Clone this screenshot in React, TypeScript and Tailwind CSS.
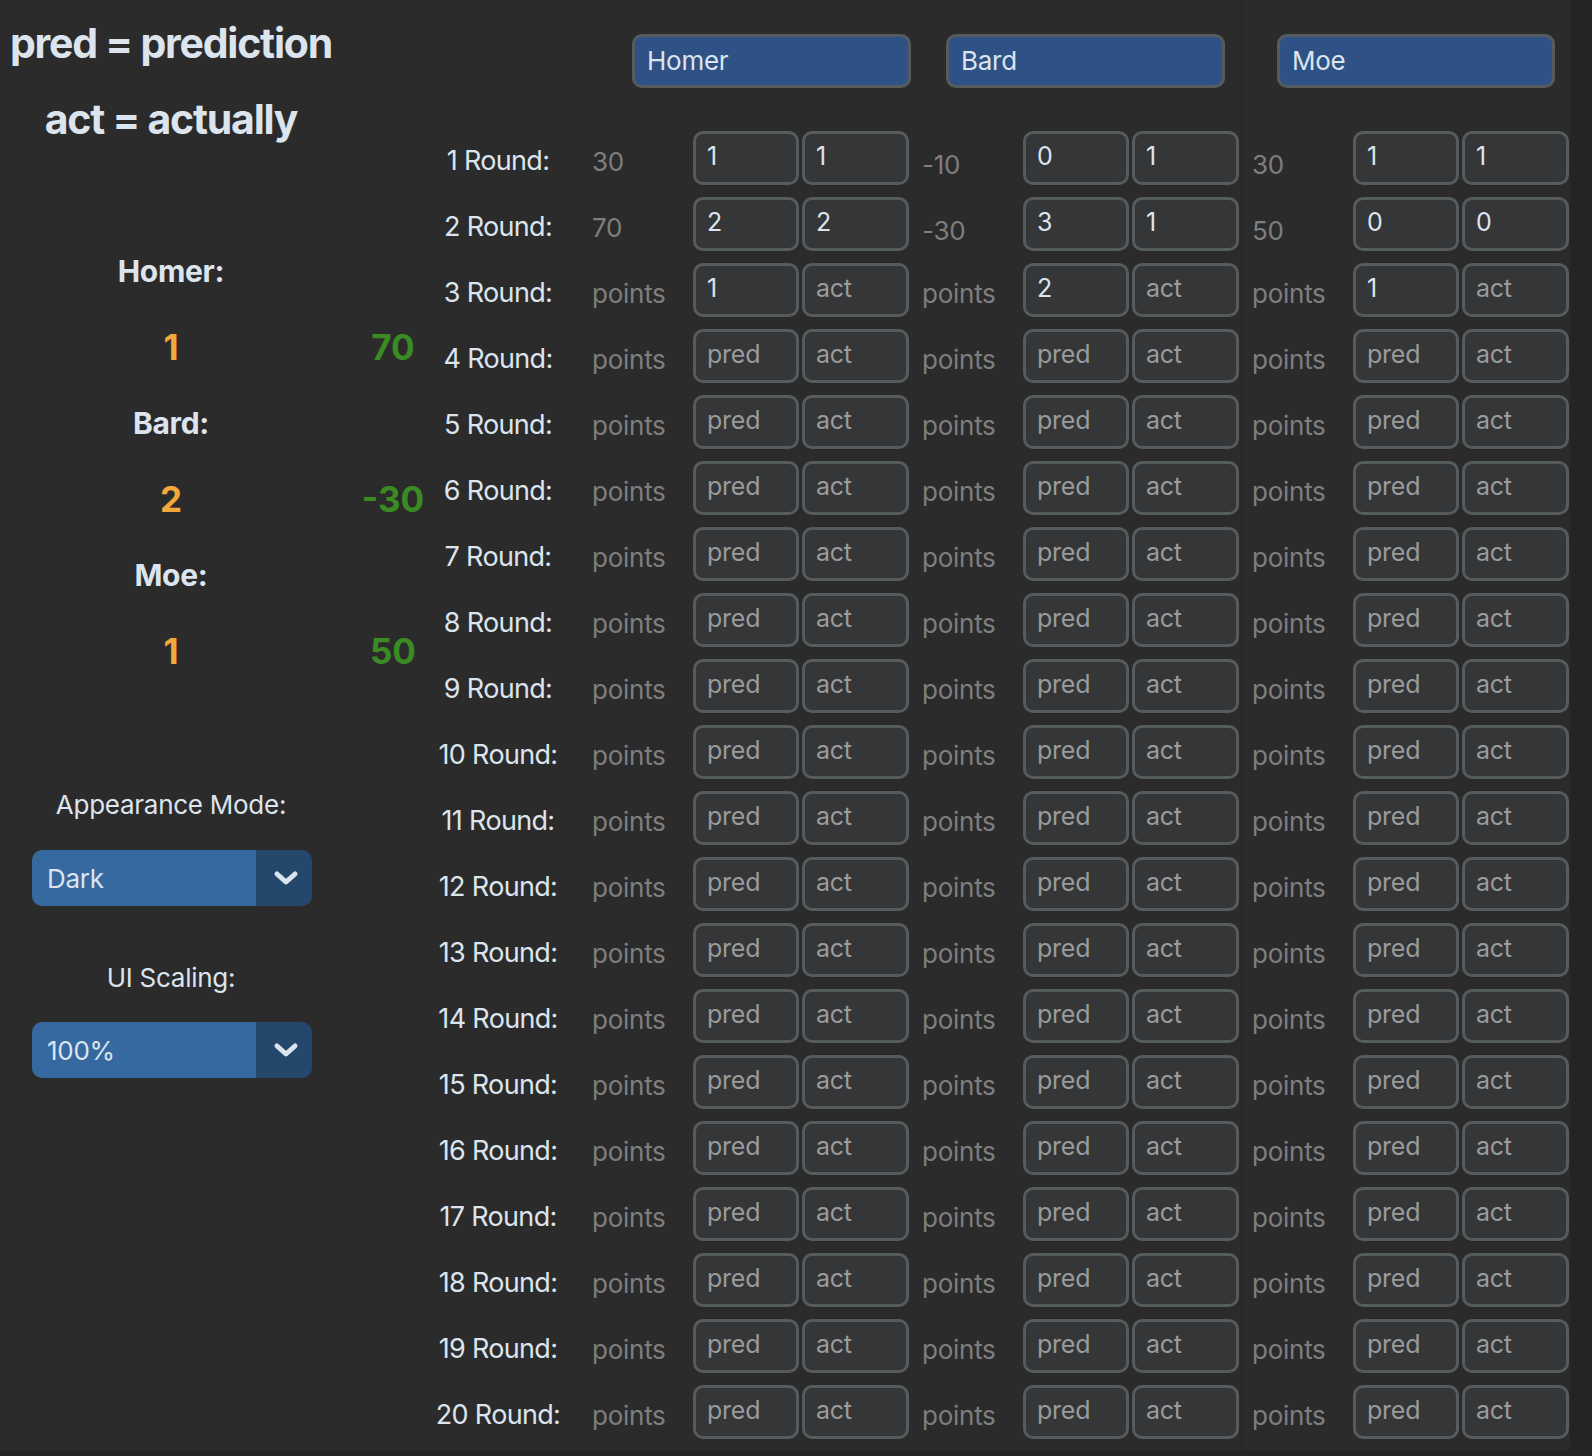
import React from 'react';

type Cell = { points?: string; pred?: string; act?: string };

const PLAYERS = ['Homer', 'Bard', 'Moe'];
const ROUNDS = 20;

// filled in rounds, per player
const FILLED: Record<string, Cell[]> = {
  Homer: [
    { points: '30', pred: '1', act: '1' },
    { points: '70', pred: '2', act: '2' },
    { pred: '1' },
  ],
  Bard: [
    { points: '-10', pred: '0', act: '1' },
    { points: '-30', pred: '3', act: '1' },
    { pred: '2' },
  ],
  Moe: [
    { points: '30', pred: '1', act: '1' },
    { points: '50', pred: '0', act: '0' },
    { pred: '1' },
  ],
};

const SCORES = [
  { name: 'Homer', pred: '1', points: '70' },
  { name: 'Bard', pred: '2', points: '-30' },
  { name: 'Moe', pred: '1', points: '50' },
];

const font = "font-['Inter',sans-serif]";

const cellOf = (player: string, round: number): Cell => FILLED[player][round] ?? {};

const Field: React.FC<{ value?: string; placeholder: string; wide?: boolean }> = ({ value, placeholder, wide }) => (
  <div
    className={`${wide ? 'w-[107px]' : 'w-[106px]'} h-[54px] shrink-0 flex items-center pl-[11px] pb-[2px] rounded-[10px] border-[3px] border-[#565b5e] bg-[#343638] text-[25px] tracking-[-0.01em] ${
      value ? 'text-[#dce4ee]' : 'text-[#9b9b9b]'
    }`}
  >
    {value ?? placeholder}
  </div>
);

const PlayerCells: React.FC<{ player: string; round: number }> = ({ player, round }) => {
  const c = cellOf(player, round);
  const low = c.points && player !== 'Homer';
  return (
    <div className="flex items-center">
      <div
        className={`w-[101px] shrink-0 ${low ? 'pt-[12px]' : 'pt-[6px]'} text-[26px] text-[#7e7e7e] tracking-[-0.01em]`}
      >
        {c.points ?? 'points'}
      </div>
      <Field value={c.pred} placeholder="pred" />
      <div className="w-[3px]" />
      <Field value={c.act} placeholder="act" wide />
    </div>
  );
};

const HeaderEntry: React.FC<{ name: string; w: string }> = ({ name, w }) => (
  <div
    className={`${w} h-[54px] flex items-center pl-[12px] pb-[1px] rounded-[10px] border-[3px] border-[#565b5e] bg-[#2e5285] text-[26px] text-[#dce4ee] tracking-[-0.01em]`}
  >
    {name}
  </div>
);

const Dropdown: React.FC<{ value: string }> = ({ value }) => (
  <div className="ml-[32px] w-[280px] h-[56px] flex rounded-[10px] overflow-hidden">
    <div className="flex-1 bg-[#3669a0] flex items-center pl-[15px] text-[26px] text-[#dce4ee] tracking-[-0.01em]">
      {value}
    </div>
    <div className="w-[56px] bg-[#24476c] flex items-center justify-center pl-[4px]">
      <svg width="26" height="16" viewBox="0 0 26 16">
        <path d="M4 4 L13 12 L22 4" fill="none" stroke="#dce4ee" strokeWidth="5" strokeLinecap="round" strokeLinejoin="round" />
      </svg>
    </div>
  </div>
);

const Sidebar: React.FC = () => (
  <div className="w-[444px] shrink-0 flex flex-col text-[#dce4ee]">
    <div className="w-[342px] h-[88px] flex items-center justify-center text-[41px] font-bold tracking-[-0.03em] whitespace-nowrap">
      pred = prediction
    </div>
    <div className="w-[342px] h-[64px] flex items-center justify-center text-[41px] font-bold tracking-[-0.03em] whitespace-nowrap">
      act = actually
    </div>
    <div className="h-[81px]" />
    {SCORES.map((s) => (
      <React.Fragment key={s.name}>
        <div className="w-[342px] h-[76px] flex items-center justify-center text-[30px] font-bold tracking-[-0.01em]">
          {s.name}:
        </div>
        <div className="grid grid-cols-[342px_102px] h-[76px] items-center text-[35px] font-bold">
          <div className="text-center text-[#f2a83a]">{s.pred}</div>
          <div className="flex justify-center text-[#3a8b24] whitespace-nowrap">{s.points}</div>
        </div>
      </React.Fragment>
    ))}
    <div className="h-[95px]" />
    <div className="w-[342px] h-[40px] flex items-center justify-center text-[26px] tracking-[-0.01em]">
      Appearance Mode:
    </div>
    <div className="h-[26px]" />
    <Dropdown value="Dark" />
    <div className="h-[51px]" />
    <div className="w-[342px] h-[40px] flex items-center justify-center text-[26px] tracking-[-0.01em]">
      UI Scaling:
    </div>
    <div className="h-[25px]" />
    <Dropdown value="100%" />
  </div>
);

export default function App() {
  const rounds = Array.from({ length: ROUNDS }, (_, i) => i);

  return (
    <div className={`w-[1592px] h-[1456px] bg-[#242424] ${font} overflow-hidden`}>
      <div className="w-[1570px] h-[1450px] bg-[#2b2b2b] flex">
        <Sidebar />

        {/* Homer + Bard */}
        <div className="w-[797px] shrink-0 flex flex-col pt-[34px]">
          <div className="flex pl-[188px] gap-[35px]">
            <HeaderEntry name={PLAYERS[0]} w="w-[279px]" />
            <HeaderEntry name={PLAYERS[1]} w="w-[279px]" />
          </div>
          <div className="mt-[43px] flex flex-col gap-[12px]">
            {rounds.map((r) => (
              <div key={r} className="flex items-center h-[54px]">
                <div className="w-[108px] shrink-0 flex justify-center pt-[6px] text-[27px] text-[#dce4ee] tracking-[-0.025em] whitespace-nowrap">
                  {r + 1} Round:
                </div>
                <div className="w-[40px] shrink-0" />
                <PlayerCells player="Homer" round={r} />
                <div className="w-[13px] shrink-0" />
                <PlayerCells player="Bard" round={r} />
              </div>
            ))}
          </div>
        </div>

        {/* Moe */}
        <div className="w-[329px] shrink-0 flex flex-col pt-[34px] border-l border-[#232323]">
          <div className="flex pl-[35px]">
            <HeaderEntry name={PLAYERS[2]} w="w-[278px]" />
          </div>
          <div className="mt-[43px] flex flex-col gap-[12px] pl-[10px]">
            {rounds.map((r) => (
              <div key={r} className="flex items-center h-[54px]">
                <PlayerCells player="Moe" round={r} />
              </div>
            ))}
          </div>
        </div>
      </div>
    </div>
  );
}
